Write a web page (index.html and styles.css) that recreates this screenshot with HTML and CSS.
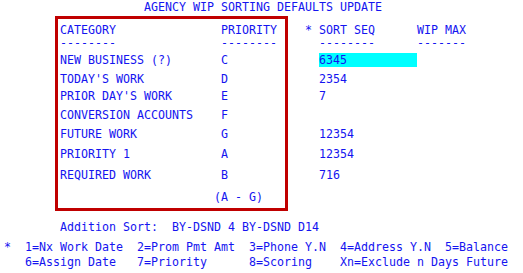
FILE: index.html
```html
<!DOCTYPE html>
<html>
<head>
<meta charset="utf-8">
<link rel="stylesheet" href="styles.css">
</head>
<body>
<div class="screen">
  <div class="title">AGENCY WIP SORTING DEFAULTS UPDATE</div>
  <div class="section">
    <div class="box">
      <div class="row h13"><span class="cat">CATEGORY</span><span class="pri">PRIORITY</span></div>
      <div class="row h17"><span class="cat">--------</span><span class="pri">--------</span></div>
      <div class="row h19"><span class="cat">NEW BUSINESS (?)</span><span class="pri">C</span></div>
      <div class="row h17"><span class="cat">TODAY'S WORK</span><span class="pri">D</span></div>
      <div class="row h19"><span class="cat">PRIOR DAY'S WORK</span><span class="pri">E</span></div>
      <div class="row h19"><span class="cat">CONVERSION ACCOUNTS</span><span class="pri">F</span></div>
      <div class="row h20"><span class="cat">FUTURE WORK</span><span class="pri">G</span></div>
      <div class="row h21"><span class="cat">PRIORITY 1</span><span class="pri">A</span></div>
      <div class="row h22"><span class="cat">REQUIRED WORK</span><span class="pri">B</span></div>
      <div class="row h14"><span class="cat"></span><span class="range">(A - G)</span></div>
    </div>
    <div class="seq">
      <div class="row h13"><span class="star">*</span><span class="sort">SORT SEQ</span><span class="wip">WIP MAX</span></div>
      <div class="row h17"><span class="star"></span><span class="sort">--------</span><span class="wip">-------</span></div>
      <div class="row h19"><span class="star"></span><span class="sort input">6345</span></div>
      <div class="row h17"><span class="star"></span><span class="sort">2354</span></div>
      <div class="row h19"><span class="star"></span><span class="sort">7</span></div>
      <div class="row h19"><span class="star"></span><span class="sort"></span></div>
      <div class="row h20"><span class="star"></span><span class="sort">12354</span></div>
      <div class="row h21"><span class="star"></span><span class="sort">12354</span></div>
      <div class="row h22"><span class="star"></span><span class="sort">716</span></div>
    </div>
  </div>
  <div class="addition"><span class="add-label">Addition Sort:</span><span class="add-value">BY-DSND 4 BY-DSND D14</span></div>
  <div class="legend">
    <span>*</span><span>1=Nx Work Date</span><span>2=Prom Pmt Amt</span><span>3=Phone Y.N</span><span>4=Address Y.N</span><span>5=Balance</span>
    <span></span><span>6=Assign Date</span><span>7=Priority</span><span>8=Scoring</span><span>Xn=Exclude n Days Future</span><span></span>
  </div>
</div>
</body>
</html>
```
FILE: styles.css
```css
html, body {
  margin: 0;
  padding: 0;
  background: #ffffff;
}

.screen {
  padding-left: 4px;
  font-family: "DejaVu Sans Mono", monospace;
  font-size: 11.63px;
  line-height: 14px;
  color: #1414f0;
  white-space: nowrap;
}

.title {
  height: 14px;
  padding-left: 140px;
}

.section {
  display: flex;
  margin-top: 2px;
}

.box {
  box-sizing: border-box;
  width: 233px;
  margin-left: 51px;
  border: 3px solid #c00000;
  padding: 4px 0 4px 2px;
}

.row {
  display: flex;
}

.h13 { height: 13px; }
.h14 { height: 14px; }
.h17 { height: 17px; }
.h19 { height: 19px; }
.h20 { height: 20px; }
.h21 { height: 21px; }
.h22 { height: 22px; }

.cat {
  width: 161px;
  flex: none;
}

.range {
  margin-left: -7px;
}

.seq {
  padding-top: 7px;
  margin-left: 17px;
}

.star {
  width: 14px;
  flex: none;
}

.sort {
  display: block;
  width: 98px;
  height: 14px;
  flex: none;
}

.input {
  background: #00ffff;
}

.addition {
  margin-top: 9px;
  padding-left: 56px;
  display: flex;
}

.add-label {
  width: 112px;
}

.legend {
  margin-top: 6px;
  display: grid;
  grid-template-columns: 21px 112px 112px 91px 105px auto;
  grid-auto-rows: 15px;
}
```
